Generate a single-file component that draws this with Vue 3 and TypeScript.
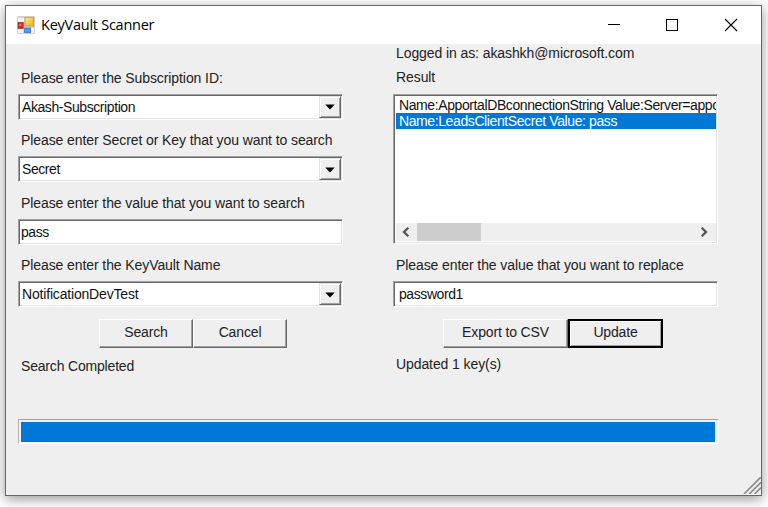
<script setup lang="ts">
import { ref } from 'vue'

interface Field {
  label: string
  value: string
  kind: 'combo' | 'text'
  fit: string
}

const fields: Field[] = [
  { label: 'Please enter the Subscription ID:', value: 'Akash-Subscription', kind: 'combo', fit: 'tight' },
  { label: 'Please enter Secret or Key that you want to search', value: 'Secret', kind: 'combo', fit: 'tight' },
  { label: 'Please enter the value that you want to search', value: 'pass', kind: 'text', fit: 'tight' },
  { label: 'Please enter the KeyVault Name', value: 'NotificationDevTest', kind: 'combo', fit: 'snug' },
]

const results: string[] = [
  'Name:ApportalDBconnectionString Value:Server=appo',
  'Name:LeadsClientSecret Value: pass',
]
const selected = ref(1)
</script>

<template>
  <div class="desktop">
    <div class="window">
      <header class="titlebar">
        <svg class="app-icon" width="18" height="18" viewBox="0 0 18 18">
          <defs>
            <linearGradient id="gold" x1="0" y1="0" x2="1" y2="1">
              <stop offset="0" stop-color="#ffe98c" />
              <stop offset="1" stop-color="#eeb010" />
            </linearGradient>
          </defs>
          <rect width="18" height="18" rx="1" fill="#d2d2d2" />
          <path d="M1 2h6v4H1zM1 13h5v4H1zM14 12h3v5h-3z" fill="#f8f8f8" />
          <rect x="1" y="6.5" width="5.2" height="6" fill="#c33627" stroke="#a32a20" stroke-width="0.7" />
          <rect x="2.4" y="7.9" width="1.8" height="2" fill="#e8897c" />
          <rect x="8" y="1.3" width="8.6" height="8.6" fill="url(#gold)" stroke="#c99a24" stroke-width="0.8" />
          <rect x="7.6" y="12" width="6" height="4.6" fill="#5a95ec" stroke="#3c77d0" stroke-width="0.8" />
        </svg>
        <h1 class="title">KeyVault Scanner</h1>
        <svg class="controls" width="130" height="14" viewBox="0 0 130 14" fill="none" stroke="#000" shape-rendering="crispEdges">
          <path d="M0 6.5h12" />
          <rect x="58.5" y="1.5" width="11" height="11" />
          <path d="M117 1l12 12M129 1l-12 12" stroke-width="1.1" shape-rendering="auto" />
        </svg>
      </header>

      <main class="body">
        <div class="columns">
          <section class="left">
            <div v-for="f in fields" :key="f.label" class="field">
              <div class="label">{{ f.label }}</div>
              <div class="sunken" :class="f.kind">
                <span class="value" :class="f.fit">{{ f.value }}</span>
                <span v-if="f.kind === 'combo'" class="drop">
                  <svg width="10" height="6" viewBox="0 0 10 6"><path d="M0.3 0.5h9.4L5 5.5z" fill="#000" /></svg>
                </span>
              </div>
            </div>
            <div class="buttons">
              <button class="btn">Search</button>
              <button class="btn">Cancel</button>
            </div>
            <div class="status snug">Search Completed</div>
          </section>

          <section class="right">
            <div class="label login">Logged in as: akashkh@microsoft.com</div>
            <div class="label result">Result</div>
            <div class="sunken list">
              <div class="rows">
                <div
                  v-for="(r, i) in results"
                  :key="r"
                  class="row"
                  :class="{ selected: i === selected }"
                  @click="selected = i"
                >{{ r }}</div>
              </div>
              <div class="scrollbar">
                <svg width="9" height="10" viewBox="0 0 9 10" fill="none" stroke="#555" stroke-width="2.3"><path d="M7.3 0.8L3 5l4.3 4.2" /></svg>
                <span class="thumb"></span>
                <svg width="9" height="10" viewBox="0 0 9 10" fill="none" stroke="#555" stroke-width="2.3"><path d="M1.7 0.8L6 5L1.7 9.2" /></svg>
              </div>
            </div>
            <div class="label replace">Please enter the value that you want to replace</div>
            <div class="sunken text"><span class="value tight inset">password1</span></div>
            <div class="buttons">
              <button class="btn wide">Export to CSV</button>
              <button class="btn default">Update</button>
            </div>
            <div class="status">Updated 1 key(s)</div>
          </section>
        </div>

        <div class="progress"><div class="bar"></div></div>
        <svg class="grip" width="18" height="17" viewBox="0 0 18 17" stroke="#8c8c8c" stroke-width="1.7">
          <path d="M1 17L18 0M6.3 17L18 5.3M11.6 17L18 10.6" />
        </svg>
      </main>
    </div>
  </div>
</template>

<style>
body {
  margin: 0;
  background: #fff;
  overflow: hidden;
}
</style>

<style scoped>
* {
  box-sizing: border-box;
}
.desktop {
  width: 768px;
  height: 507px;
  padding: 5px;
  overflow: hidden;
  background: #fff;
  font: 14px/16px "Liberation Sans", Arial, sans-serif;
  color: #222;
}
.window {
  width: 757px;
  height: 491px;
  border: 1px solid #666;
  background: #efefef;
  box-shadow: 0 3px 12px rgba(0, 0, 0, 0.42);
}
.titlebar {
  display: flex;
  align-items: center;
  height: 38px;
  padding-left: 11px;
  background: #fff;
}
.title {
  margin: 0 0 0 6px;
  font: 400 14.5px/20px "Open Sans", "Noto Sans", sans-serif;
  letter-spacing: -0.25px;
  color: #000;
}
.controls {
  margin-left: auto;
  margin-right: 23px;
}
.body {
  position: relative;
  height: 451px;
  padding: 0 43px 0 12px;
}
.columns {
  display: flex;
  justify-content: space-between;
  height: 375px;
}
.left {
  width: 325px;
  padding-top: 25.5px;
}
.right {
  width: 325px;
}
.field {
  height: 62.5px;
}
.label,
.status {
  padding-left: 3px;
  letter-spacing: -0.09px;
  white-space: nowrap;
}
.sunken {
  display: flex;
  height: 26px;
  margin-top: 8px;
  border: 1px solid;
  border-color: #a0a0a0 #fff #fff #a0a0a0;
  background: #fff;
  box-shadow: inset 1px 1px #696969, inset -1px -1px #e3e3e3;
}
.value {
  flex: 1;
  padding: 4px 0 0 3px;
  color: #111;
  white-space: nowrap;
}
.text .value {
  padding-top: 4px;
  padding-left: 2px;
}
.text .value.inset {
  padding-left: 5px;
}
.tight {
  letter-spacing: -0.42px;
}
.snug {
  letter-spacing: -0.18px;
}
.drop {
  display: flex;
  align-items: center;
  justify-content: center;
  width: 22px;
  margin: 1px;
  padding-top: 1px;
  background: #efefef;
  border: 1px solid;
  border-color: #e3e3e3 #696969 #696969 #e3e3e3;
  box-shadow: inset 1px 1px #fff, inset -1px -1px #a0a0a0;
}
.buttons {
  display: flex;
  height: 29px;
}
.left .buttons {
  margin: -1px 0 0 81px;
}
.btn {
  width: 94px;
  padding: 0 0 3px;
  font: inherit;
  color: inherit;
  letter-spacing: -0.15px;
  background: #efefef;
  border: 1px solid;
  border-color: #fff #696969 #696969 #fff;
  box-shadow: inset -1px -1px #a0a0a0;
}
.btn.wide {
  width: 125px;
}
.btn.default {
  width: 95px;
  border: 2px solid #000;
  box-shadow: inset 1px 1px #fff, inset -1px -1px #a0a0a0;
}
.left .status {
  margin-top: 10px;
}
.login {
  padding-top: 1px;
}
.right .result {
  margin-top: 8px;
}
.list {
  flex-direction: column;
  height: 150px;
  margin-top: 9px;
  padding: 2px 1px 2px 2px;
}
.rows {
  flex: 1;
  overflow: hidden;
}
.row {
  height: 16px;
  padding-left: 3px;
  overflow: hidden;
  white-space: nowrap;
  letter-spacing: -0.4px;
  color: #111;
}
.row.selected {
  color: #fff;
  background: #0078d7;
}
.scrollbar {
  display: flex;
  align-items: center;
  height: 18px;
  padding: 0 7px 0 5px;
  background: #efefef;
}
.thumb {
  width: 64px;
  height: 18px;
  margin: 0 auto 0 7px;
  background: #cdcdcd;
}
.replace {
  margin-top: 13px;
}
.right .buttons {
  margin: 12px 0 0 50px;
}
.right .status {
  margin-top: 8px;
}
.progress {
  width: 701px;
  height: 25px;
  padding: 2px;
  border: 1px solid;
  border-color: #a0a0a0 #fff #fff #b4b4b4;
  background: #f0f0f0;
}
.bar {
  width: 694px;
  height: 20px;
  background: #0078d7;
}
.grip {
  position: absolute;
  right: 0;
  bottom: 1px;
}
</style>
